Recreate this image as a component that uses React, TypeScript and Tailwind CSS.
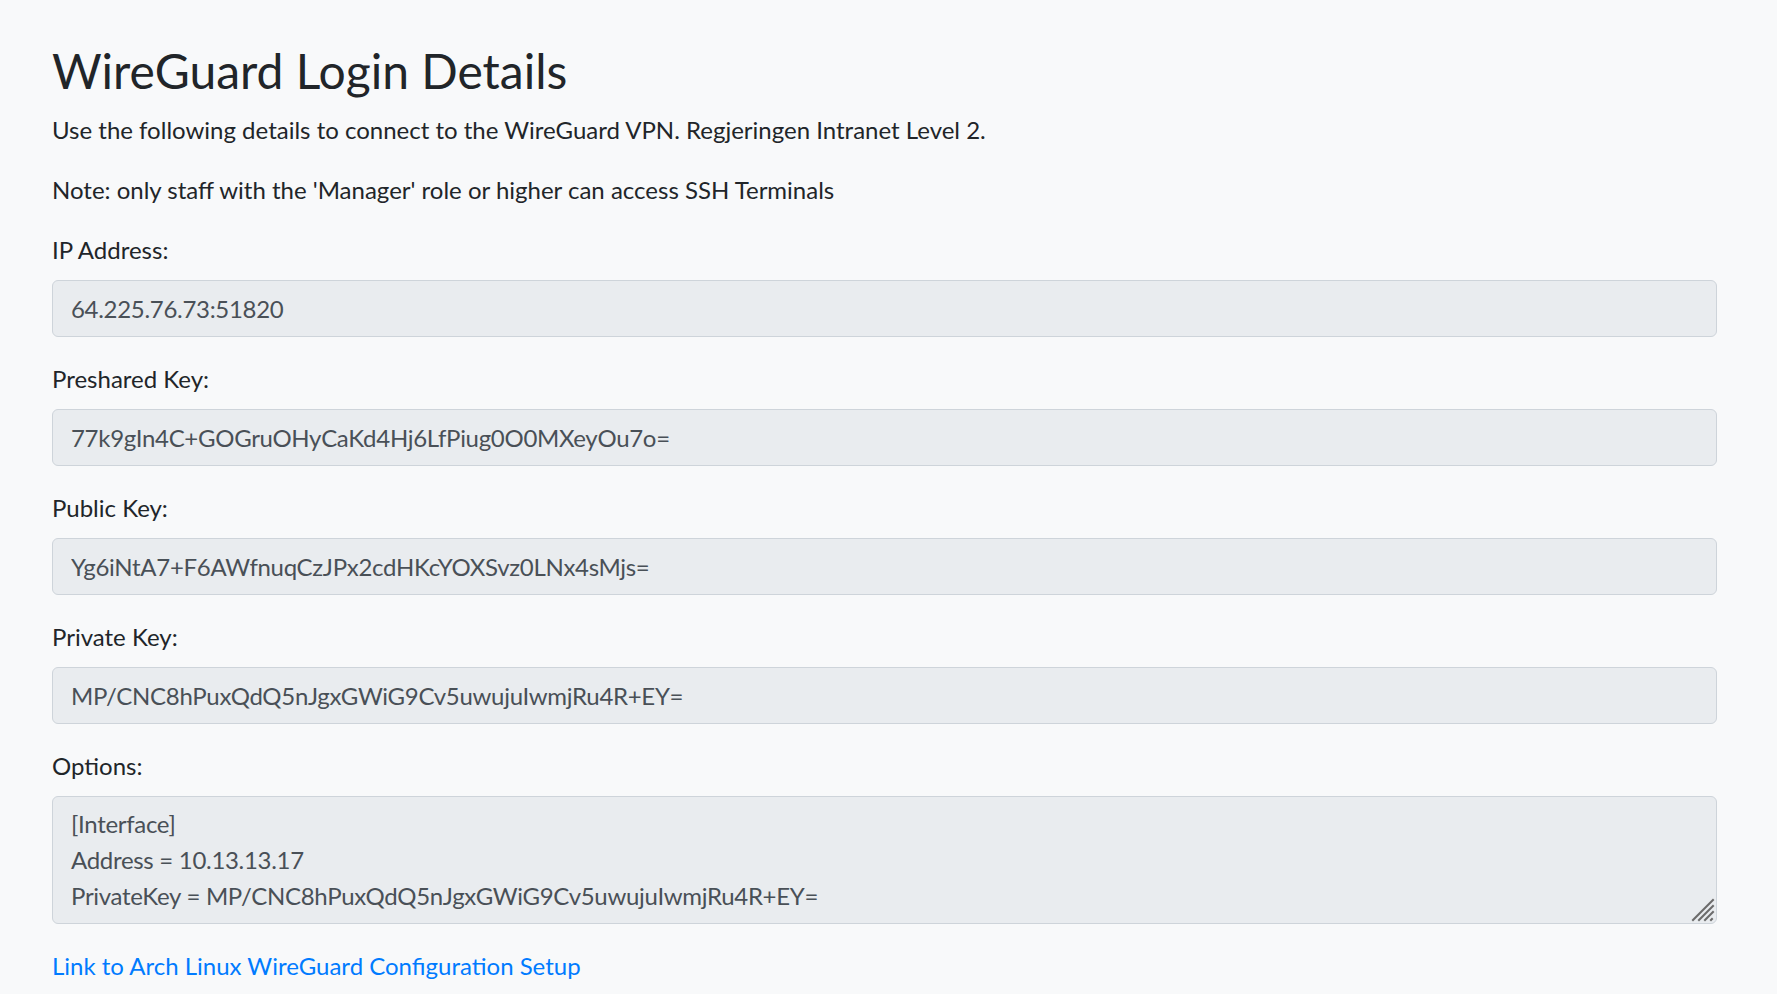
import React from 'react';

const fields = [
  { label: 'IP Address:', value: '64.225.76.73:51820' },
  { label: 'Preshared Key:', value: '77k9gIn4C+GOGruOHyCaKd4Hj6LfPiug0O0MXeyOu7o=' },
  { label: 'Public Key:', value: 'Yg6iNtA7+F6AWfnuqCzJPx2cdHKcYOXSvz0LNx4sMjs=' },
  { label: 'Private Key:', value: 'MP/CNC8hPuxQdQ5nJgxGWiG9Cv5uwujuIwmjRu4R+EY=' },
];

const options = `[Interface]
Address = 10.13.13.17
PrivateKey = MP/CNC8hPuxQdQ5nJgxGWiG9Cv5uwujuIwmjRu4R+EY=`;

export default function App() {
  return (
    <div
      className="min-h-screen bg-[#f8f9fa] text-[#212529] text-[24px] leading-[36px]"
      style={{ fontFamily: 'Lato, "Open Sans", sans-serif' }}
    >
      <div className="pl-[52px] pr-[60px] pt-[42px]">
        <h2 className="text-[48px] leading-[57.6px] font-normal mb-[12px]">
          WireGuard Login Details
        </h2>
        <p className="mb-[24px]">
          Use the following details to connect to the WireGuard VPN. Regjeringen Intranet Level 2.
        </p>
        <p className="mb-[24px]">
          Note: only staff with the 'Manager' role or higher can access SSH Terminals
        </p>

        {fields.map((f) => (
          <div key={f.label} className="mb-[24px]">
            <label className="block mb-[12px]">{f.label}</label>
            <input
              readOnly
              value={f.value}
              className="block w-full h-[57px] px-[18px] py-[9px] bg-[#e9ecef] border border-[#ced4da] rounded-[6px] text-[#495057] tracking-[-0.3px] outline-none"
              style={{ fontFamily: 'inherit', fontSize: 'inherit' }}
            />
          </div>
        ))}

        <div className="mb-[24px]">
          <label className="block mb-[12px]">Options:</label>
          <div className="relative">
            <textarea
              readOnly
              rows={3}
              value={options}
              className="block w-full px-[18px] py-[9px] bg-[#e9ecef] border border-[#ced4da] rounded-[6px] text-[#495057] leading-[36px] tracking-[-0.3px] resize-none outline-none"
              style={{ fontFamily: 'inherit', fontSize: 'inherit' }}
            />
            {/* resize grip */}
            <svg
              className="absolute right-[2px] bottom-[2px]"
              width="24"
              height="24"
              viewBox="0 0 24 24"
            >
              <g stroke="#6b6b6b" strokeWidth="2" strokeLinecap="square">
                <line x1="2" y1="22" x2="22" y2="2" />
                <line x1="8" y1="22" x2="22" y2="8" />
                <line x1="14" y1="22" x2="22" y2="14" />
                <line x1="20" y1="22" x2="21" y2="21" />
              </g>
            </svg>
          </div>
        </div>

        <a href="#" className="text-[#007bff]">
          Link to Arch Linux WireGuard Configuration Setup
        </a>
      </div>
    </div>
  );
}
